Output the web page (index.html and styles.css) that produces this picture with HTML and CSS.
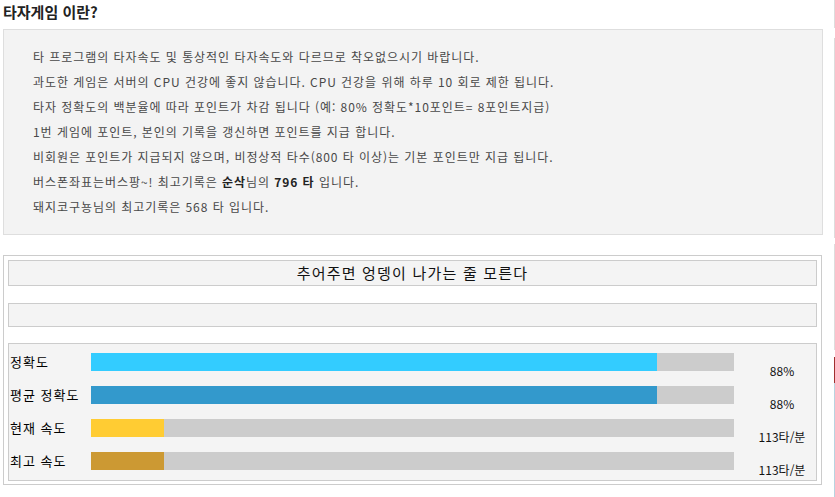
FILE: index.html
```html
<!DOCTYPE html>
<html lang="ko">
<head>
<meta charset="utf-8">
<title>타자게임 이란?</title>
<link rel="stylesheet" href="styles.css">
</head>
<body>
<div class="page">
  <main class="main">
    <h2 class="title">타자게임 이란?</h2>
    <div class="info">
      <p>타 프로그램의 타자속도 및 통상적인 타자속도와 다르므로 착오없으시기 바랍니다.</p>
      <p>과도한 게임은 서버의 CPU 건강에 좋지 않습니다. CPU 건강을 위해 하루 10 회로 제한 됩니다.</p>
      <p>타자 정확도의 백분율에 따라 포인트가 차감 됩니다 (예: 80% 정확도*10포인트= 8포인트지급)</p>
      <p>1번 게임에 포인트, 본인의 기록을 갱신하면 포인트를 지급 합니다.</p>
      <p>비회원은 포인트가 지급되지 않으며, 비정상적 타수(800 타 이상)는 기본 포인트만 지급 됩니다.</p>
      <p>버스폰좌표는버스팡~! 최고기록은 <b>순삭</b>님의 <b>796 타</b> 입니다.</p>
      <p>돼지코구뇽님의 최고기록은 568 타 입니다.</p>
    </div>
    <div class="game">
      <div class="phrase">추어주면 엉뎅이 나가는 줄 모른다</div>
      <div class="input-bar"></div>
      <div class="stats">
        <div class="row">
          <span class="label">정확도</span>
          <div class="track"><div class="fill fill-acc" style="width:88%"></div></div>
          <span class="value">88%</span>
        </div>
        <div class="row">
          <span class="label">평균 정확도</span>
          <div class="track"><div class="fill fill-avg" style="width:88%"></div></div>
          <span class="value">88%</span>
        </div>
        <div class="row">
          <span class="label">현재 속도</span>
          <div class="track"><div class="fill fill-cur" style="width:11.3%"></div></div>
          <span class="value">113타/분</span>
        </div>
        <div class="row">
          <span class="label">최고 속도</span>
          <div class="track"><div class="fill fill-max" style="width:11.3%"></div></div>
          <span class="value">113타/분</span>
        </div>
      </div>
    </div>
  </main>
  <aside class="side">
    <div class="side-line s1"></div>
    <div class="side-line s2"></div>
    <div class="side-line s3"></div>
    <div class="side-red"></div>
    <div class="side-blue"></div>
  </aside>
</div>
</body>
</html>
```
FILE: styles.css
```css
html, body {
  margin: 0;
  padding: 0;
  background: #ffffff;
}
body {
  font-family: "Noto Sans CJK KR", "Noto Sans", sans-serif;
  color: #333;
}
.page {
  display: flex;
  width: 835px;
  height: 497px;
  overflow: hidden;
}
.main {
  width: 820px;
  margin-left: 3px;
  flex: none;
}
.title {
  margin: 0;
  height: 29px;
  line-height: 23px;
  font-size: 15px;
  font-weight: bold;
  color: #222;
}
.info {
  background: #f3f3f3;
  border: 1px solid #dedede;
  padding: 14px 0 15px 29px;
  height: 175px;
  font-size: 12px;
  letter-spacing: 0.95px;
  color: #484848;
}
.info p {
  margin: 0;
  line-height: 25px;
  height: 25px;
  white-space: nowrap;
}
.info b {
  color: #222;
}
.game {
  margin-top: 20px;
  width: 819px;
  border: 1px solid #cccccc;
  padding: 4px 0 3px 4px;
  box-sizing: border-box;
  height: 230px;
  display: flex;
  flex-direction: column;
}
.phrase {
  width: 809px;
  box-sizing: border-box;
  height: 26px;
  border: 1px solid #cccccc;
  background: #f4f4f4;
  text-align: center;
  font-size: 15px;
  letter-spacing: 1.2px;
  line-height: 24px;
  color: #111;
}
.input-bar {
  width: 809px;
  box-sizing: border-box;
  height: 24px;
  margin-top: 17px;
  border: 1px solid #cccccc;
  background: #f4f4f4;
}
.stats {
  width: 809px;
  box-sizing: border-box;
  height: 138px;
  margin-top: 16px;
  border: 1px solid #cccccc;
  background: #f4f4f4;
  padding: 9px 0 9px 1px;
  display: flex;
  flex-direction: column;
  gap: 15px;
}
.row {
  display: flex;
  align-items: flex-start;
  height: 18px;
}
.label {
  width: 81px;
  flex: none;
  font-size: 13px;
  letter-spacing: 1px;
  line-height: 18px;
  color: #000;
  white-space: nowrap;
}
.track {
  width: 643px;
  height: 18px;
  flex: none;
  background: #cccccc;
}
.fill {
  height: 100%;
}
.fill-acc { background: #33ccff; }
.fill-avg { background: #3399cc; }
.fill-cur { background: #ffcc33; }
.fill-max { background: #cc9933; }
.value {
  width: 82px;
  flex: none;
  box-sizing: border-box;
  padding-left: 14px;
  text-align: center;
  font-size: 12px;
  line-height: 18px;
  margin-top: 9px;
  color: #111;
  white-space: nowrap;
}
.side {
  margin-left: 11px;
  width: 1px;
  flex: none;
  display: flex;
  flex-direction: column;
}
.side-line {
  background: #dddddd;
}
.s1 { height: 28px; }
.s2 { height: 200px; margin-top: 10px; }
.s3 { height: 106px; margin-top: 6px; }
.side-red { height: 26px; margin-top: 7px; background: #a03030; }
.side-blue { flex: 1; background: #b8d4e0; }
```
